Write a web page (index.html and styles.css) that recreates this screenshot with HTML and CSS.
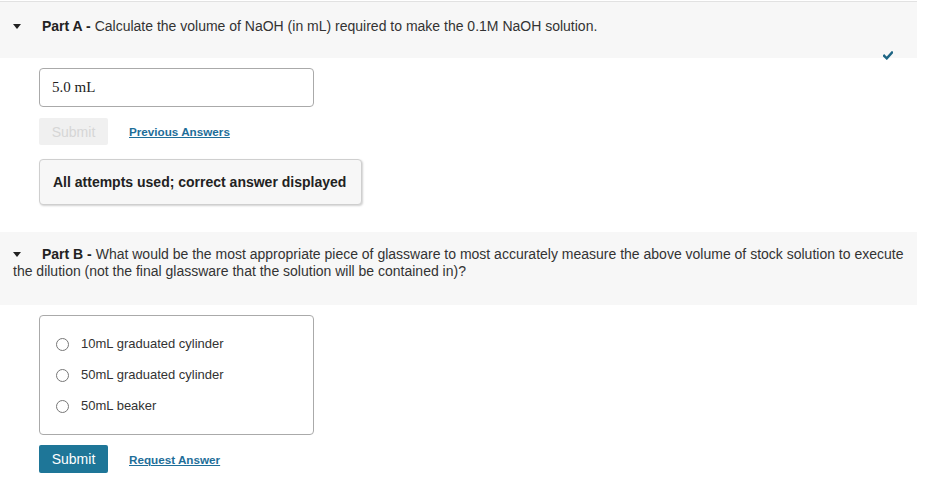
FILE: index.html
```html
<!DOCTYPE html>
<html>
<head>
<meta charset="utf-8">
<link rel="stylesheet" href="styles.css">
</head>
<body>
<div class="page">
  <section class="part part-a">
    <div class="part-head">
      <p class="prompt"><span class="caret"></span><b>Part A -</b> Calculate the volume of NaOH (in mL) required to make the 0.1M NaOH solution.</p>
      <div class="status">
        <svg class="check" width="10" height="9" viewBox="0 0 10 9"><path d="M1.2 4.8 L3.8 7.3 L9 1.6" fill="none" stroke="#1d6584" stroke-width="2.5" stroke-linecap="square"/></svg>
      </div>
    </div>
    <div class="part-body">
      <div class="answer-box"><span class="math">5.0 mL</span></div>
      <div class="actions">
        <button class="btn btn-disabled">Submit</button>
        <a class="link" href="#">Previous Answers</a>
      </div>
      <div class="feedback">All attempts used; correct answer displayed</div>
    </div>
  </section>
  <section class="part part-b">
    <div class="part-head">
      <p class="prompt"><span class="caret"></span><b>Part B -</b> What would be the most appropriate piece of glassware to most accurately measure the above volume of stock solution to execute the dilution (not the final glassware that the solution will be contained in)?</p>
    </div>
    <div class="part-body">
      <div class="options">
        <label class="option"><span class="radio"></span>10mL graduated cylinder</label>
        <label class="option"><span class="radio"></span>50mL graduated cylinder</label>
        <label class="option"><span class="radio"></span>50mL beaker</label>
      </div>
      <div class="actions">
        <button class="btn btn-primary">Submit</button>
        <a class="link" href="#">Request Answer</a>
      </div>
    </div>
  </section>
</div>
</body>
</html>
```
FILE: styles.css
```css
html, body {
  margin: 0;
  padding: 0;
  background: #fff;
}
body {
  font-family: "Liberation Sans", Arial, sans-serif;
  color: #333;
}
.page {
  width: 917px;
  padding-top: 1px;
}
.part-a {
  border-top: 1px solid #e2e2e2;
}
.part-head {
  background: #f7f7f7;
}
.part-a .part-head {
  padding: 1px 0 0 0;
  height: 55px;
}
.prompt {
  margin: 0;
  font-size: 14px;
  line-height: 17px;
  padding: 0 13px;
}
.part-a .prompt {
  padding-top: 15px;
}
.prompt b {
  color: #222;
}
.caret {
  display: inline-block;
  width: 0;
  height: 0;
  border-left: 4px solid transparent;
  border-right: 4px solid transparent;
  border-top: 5px solid #222;
  margin-right: 21px;
  vertical-align: 2px;
}
.status {
  display: flex;
  justify-content: flex-end;
  padding-right: 24px;
  margin-top: 16px;
}
.check {
  display: block;
}
.part-body {
  padding: 0 0 0 39px;
}
.part-a .part-body {
  padding-top: 10px;
}
.answer-box {
  border: 1px solid #aaa;
  border-radius: 4px;
  display: flex;
  align-items: center;
  padding-left: 12px;
  box-sizing: border-box;
  width: 275px;
  height: 39px;
}
.math {
  font-family: "Liberation Serif", "Times New Roman", serif;
  font-size: 15px;
  color: #222;
}
.actions {
  display: flex;
  align-items: center;
  gap: 21px;
  margin-top: 11px;
}
.btn {
  width: 69px;
  height: 28px;
  border: none;
  border-radius: 2px;
  font-family: "Liberation Sans", Arial, sans-serif;
  font-size: 14px;
  padding: 0;
}
.btn-disabled {
  background: #f0f0f0;
  color: #d6d6d6;
  height: 27px;
}
.btn-primary {
  background: #1e7698;
  color: #fff;
}
.link {
  font-size: 11.7px;
  font-weight: bold;
  color: #1e6e99;
  text-decoration: underline;
}
.feedback {
  margin-top: 14px;
  width: 323px;
  height: 46px;
  box-sizing: border-box;
  border: 1px solid #cfcfcf;
  border-radius: 4px;
  background: #f7f7f7;
  box-shadow: 1px 1px 2px rgba(0,0,0,0.18);
  font-size: 14px;
  font-weight: bold;
  color: #222;
  display: flex;
  align-items: center;
  padding-left: 13px;
}
.part-b {
  margin-top: 27px;
}
.part-b .part-head {
  padding: 14px 0 25px;
}
.part-b .part-body {
  padding-top: 10px;
}
.options {
  width: 275px;
  height: 120px;
  box-sizing: border-box;
  border: 1px solid #aaa;
  border-radius: 4px;
  padding: 19px 0 0 16px;
  display: flex;
  flex-direction: column;
  gap: 13px;
}
.option {
  display: flex;
  align-items: center;
  font-size: 13px;
  line-height: 18px;
  color: #333;
}
.radio {
  width: 11px;
  height: 11px;
  border: 1px solid #777;
  border-radius: 50%;
  margin-right: 12px;
  background: #fff;
}
.part-b .actions {
  margin-top: 10px;
}
```
